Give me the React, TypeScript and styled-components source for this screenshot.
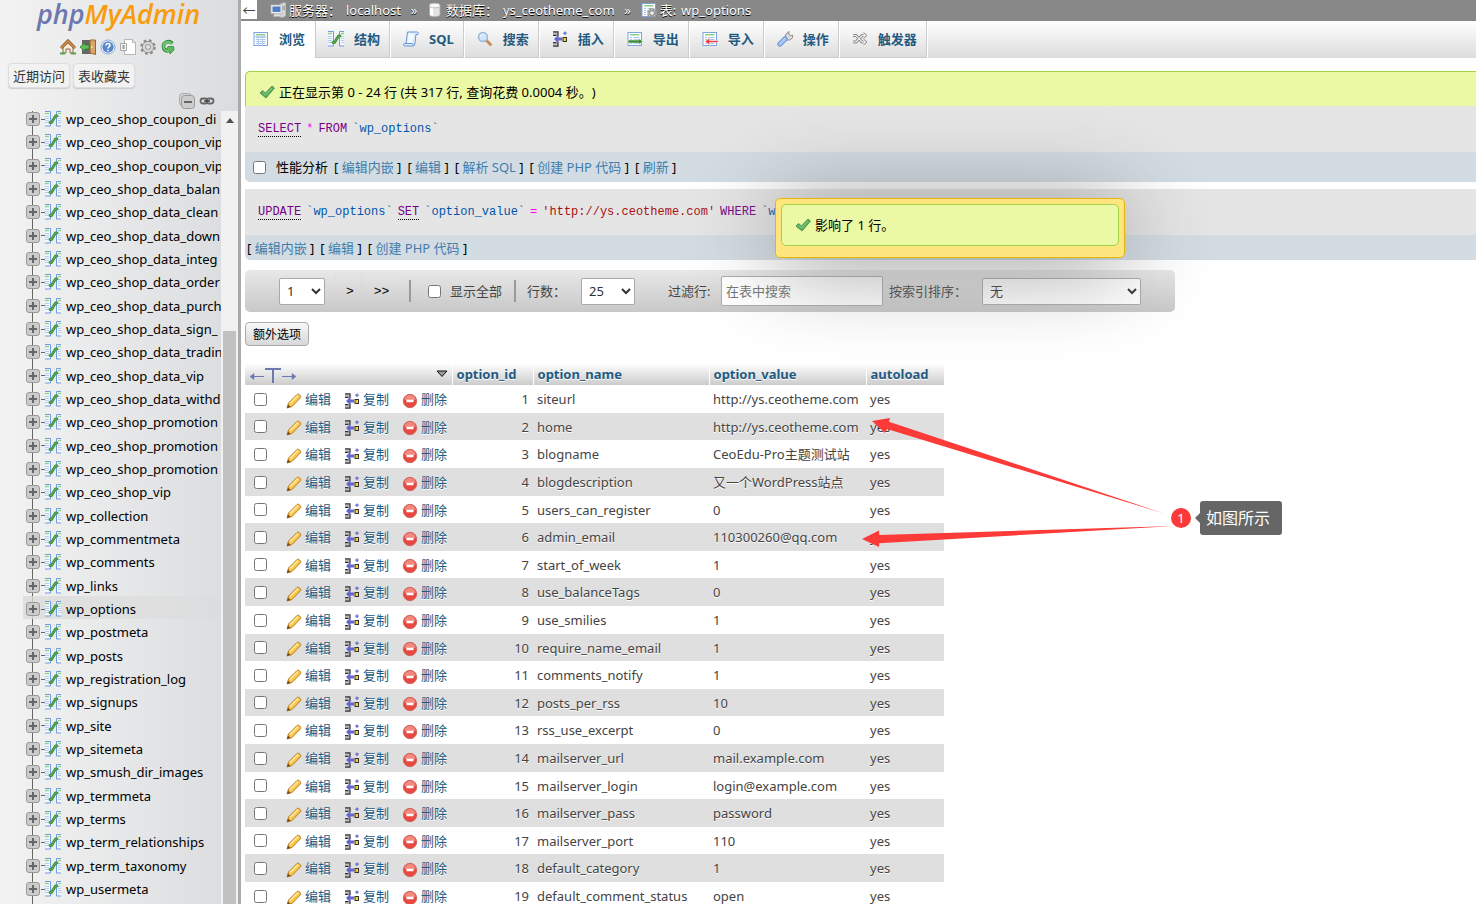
import React from "react";
import styled, { createGlobalStyle } from "styled-components";

const GlobalStyle = createGlobalStyle`
  * { box-sizing: border-box; }
  body {
    margin: 0;
    background: #fff;
    color: #444;
    font-family: "Noto Sans", "Noto Sans CJK SC", sans-serif;
    font-size: 13px;
    line-height: 18px;
    text-spacing-trim: space-all;
    overflow: hidden;
  }
  button, input, select { font-family: inherit; font-size: 13px; margin: 0; }
  a { text-decoration: none; }
`;

/* ---------- icons ---------- */

const Icon = styled.svg.attrs({ viewBox: "0 0 16 16", "aria-hidden": true })`
  width: 16px;
  height: 16px;
  flex: none;
  display: block;
`;

const Sheet = () => (
  <>
    <rect x="1" y="1.5" width="13.5" height="13" fill="#fdfeff" stroke="#7da4dc" />
    <rect x="3" y="3" width="9.500" height="1.500" fill="#8fce8a" />
    <path d="M3 6.500h2M6.500 6.500h6M3 8.500h2M6.500 8.500h6M3 10.500h2M6.500 10.500h6M3 12.500h2M6.500 12.500h6" stroke="#a9c4ec" />
  </>
);

const BrowseIcon = () => (
  <Icon>
    <Sheet />
    <path d="M2 5.500h11.500M5.500 5.500v9M9.500 5.500v9" stroke="#b9cff0" />
  </Icon>
);

const StructureIcon = () => (
  <Icon>
    <path d="M0 .5h5.500v14.500H0M16 .5h-4.500v14.500H16" fill="#f4f8ff" stroke="#6f9bdc" />
    <path d="M0 2.500h4M13 2.500h3" stroke="#8fce8a" strokeWidth="1.500" />
    <path d="M0 5.500h4M0 7.500h4M0 9.500h4M0 11.500h4M13 5.500h3M13 7.500h3M13 9.500h3M13 11.500h3" stroke="#b3cbee" />
    <path d="M5 11.500h1.500L10.500 5H12" fill="none" stroke="#3f8f3a" strokeWidth="2.800" strokeLinecap="round" strokeLinejoin="round" />
    <path d="M5 11.500h1.500L10.500 5H12" fill="none" stroke="#66b15c" strokeWidth="1" strokeLinecap="round" />
  </Icon>
);

const SqlIcon = () => (
  <Icon>
    <path d="M4.500 1h10c1 0 1.200 2.500.3 2.500H13L11.800 13c-.2 1.500-.8 2-2 2H1.500C.3 15 .3 12.500 1.500 12.500H3z" fill="#d9eafc" stroke="#6a94d4" />
    <path d="M5.500 2.500h5.500l-1.300 9.500H4.300z" fill="#f2f8ff" />
    <path d="M2 12.500h7.500c.8.300.5 2 .8 2.300" fill="none" stroke="#6a94d4" />
  </Icon>
);

const SearchIcon = () => (
  <Icon>
    <path d="M9.500 9.500l4 4" stroke="#c98d55" strokeWidth="3" strokeLinecap="round" />
    <circle cx="6" cy="6" r="4.500" fill="#cfe5fb" stroke="#9db5d8" strokeWidth="1.500" />
    <path d="M3.500 5.500c.5-1.500 1.500-2 3-2" stroke="#fff" fill="none" />
  </Icon>
);

const InsertIcon = () => (
  <Icon>
    <path d="M1 1h5v4.500H4.500V4H1zM1 15h5v-4.500H4.500V12H1z" fill="#bbb" />
    <path d="M1 .8h5V5M1 4.300h3.500M1 15.200h5V11M1 11.700h3.500" fill="none" stroke="#333" strokeWidth="1.200" />
    <path d="M2 8l4.500-4.500v3H10v3H6.500v3z" fill="#6666cc" />
    <rect x="11" y="6.500" width="3.500" height="4" fill="#fc3" stroke="#333" />
    <path d="M13 .5v3.500M11.200 2.200h3.600" stroke="#6666cc" strokeWidth="1.200" />
  </Icon>
);

const ExportIcon = () => (
  <Icon>
    <Sheet />
    <path d="M1 9h11V7.500l4 3-4 3V12H1z" fill="#3c8c3a" stroke="#fff" strokeWidth=".5" />
  </Icon>
);

const ImportIcon = () => (
  <Icon>
    <Sheet />
    <path d="M16 9.500H7.500V7L3 10.500 7.500 14v-2.500H16z" fill="#ee3b3b" stroke="#fff" strokeWidth=".5" />
  </Icon>
);

const WrenchIcon = () => (
  <Icon>
    <path d="M8 7.500l1-4.500 3-2.500v3.200l1.500 1L15.500 4l.2 2.800-3 2.200H10z" fill="#ddd" stroke="#8c8c8c" />
    <path d="M3 13l5-5" stroke="#5c83c9" strokeWidth="5" strokeLinecap="round" />
    <path d="M3 13l5-5" stroke="#a9c8f5" strokeWidth="3.200" strokeLinecap="round" />
  </Icon>
);

const ShuffleIcon = () => (
  <Icon>
    <path d="M1 4.500h3L10 11h3M1 11h3l6-6.500h3" fill="none" stroke="#888" strokeWidth="3" />
    <path d="M11.500 1.500l3.500 3-3.500 3M11.500 8l3.500 3-3.500 3" fill="#eee" stroke="#888" />
    <path d="M1 4.500h3L10 11h3M1 11h3l6-6.500h3" fill="none" stroke="#eee" strokeWidth="1.200" />
  </Icon>
);

const ServerIcon = () => (
  <Icon>
    <path d="M10 2l3-1.500h3V14l-3 1.500h-3z" fill="#d4d4d4" stroke="#999" strokeWidth=".7" />
    <path d="M11 5h4M11 7h4" stroke="#888" />
    <rect x="1" y="3" width="11" height="8.500" fill="#f2f2f2" stroke="#bbb" strokeWidth=".7" />
    <rect x="2.500" y="4.500" width="8" height="5.500" fill="#4d7fc4" />
    <path d="M3 14.500h8l-1.500-2.500h-5z" fill="#ddd" />
  </Icon>
);

const DatabaseIcon = () => (
  <Icon>
    <path d="M2.500 3.500v9c0 3 10.500 3 10.500 0v-9z" fill="#e2e2e2" stroke="#aaa" strokeWidth=".8" />
    <path d="M3 4h3v10.200L3 13z" fill="#fff" />
    <ellipse cx="7.700" cy="3.500" rx="5.200" ry="2.300" fill="#f8f8f8" stroke="#b5b5b5" strokeWidth=".8" />
  </Icon>
);

const TableGearIcon = () => (
  <Icon>
    <Sheet />
    <circle cx="11" cy="11" r="3.500" fill="none" stroke="#999" strokeWidth="3" strokeDasharray="2 .75" />
    <circle cx="11" cy="11" r="2.600" fill="#eee" stroke="#999" strokeWidth="1.500" />
  </Icon>
);

const TickIcon = () => (
  <Icon>
    <path d="M1 9l2.500-2.500L6.500 9 13 2l2.500 2L7 14z" fill="#5cae5e" stroke="#3e8a45" strokeWidth=".8" strokeLinejoin="round" />
    <path d="M3.500 8l3 3L13 4" fill="none" stroke="#8fcf8d" />
  </Icon>
);

const HomeIcon = () => (
  <Icon>
    <path d="M3 8v6h3v-4h4v4h3V8L8 3.500z" fill="#f5ead7" stroke="#8d6b42" />
    <path d="M1 9l7-7 7 7" fill="none" stroke="#7c4b20" strokeWidth="3" />
    <path d="M1 9l7-7 7 7" fill="none" stroke="#dc9a4d" strokeWidth="1.500" />
    <path d="M0 14.500h5M11 14.500h5" stroke="#56a34b" strokeWidth="2" />
  </Icon>
);

const ExitIcon = () => (
  <Icon>
    <rect x="2" y="1" width="9" height="14" fill="#666" />
    <path d="M10 1h5.500v14.500L10 14z" fill="#d9a76c" stroke="#9b6630" />
    <circle cx="11.800" cy="8" r=".8" fill="#fff" />
    <path d="M0 8l5-4.500V6h4v4H5v2.500z" fill="#63bb5a" stroke="#2f7c30" strokeWidth=".8" />
  </Icon>
);

const HelpIcon = () => (
  <Icon>
    <circle cx="8" cy="8" r="7" fill="#fff" stroke="#88a8d4" />
    <circle cx="8" cy="8" r="5.700" fill="#5587cb" />
    <path d="M6 6.500c0-2.600 4-2.600 4-.2C10 7.800 8 7.600 8 9.500M8 10.700v1.500" fill="none" stroke="#fff" strokeWidth="1.600" />
  </Icon>
);

const DocIcon = () => (
  <Icon>
    <path d="M4.500.5h8l3 3v12h-11z" fill="#fff" stroke="#b5b5b5" />
    <path d="M12.500.5v3h3" fill="#eee" stroke="#b5b5b5" />
    <path d="M.5 4.500h6v7h-6z" fill="#f3f3f3" stroke="#a8a8a8" />
    <path d="M3.500 6v4" stroke="#999" strokeWidth="2" />
  </Icon>
);

const GearIcon = () => (
  <Icon>
    <circle cx="8" cy="8" r="6.300" fill="none" stroke="#8b8b8b" strokeWidth="3" strokeDasharray="2.600 2.350" />
    <circle cx="8" cy="8" r="4" fill="none" stroke="#8b8b8b" strokeWidth="4" />
    <circle cx="8" cy="8" r="4" fill="none" stroke="#d5d5d5" strokeWidth="2.600" />
  </Icon>
);

const ReloadIcon = () => (
  <Icon>
    <path d="M12.500 4.500C8 .5 3 4 3.500 8c.3 2.500 2 4 5 4" fill="none" stroke="#2f8a3c" strokeWidth="3.600" />
    <path d="M8 7.500h5.500l.5 3.500-4 4-.8-3-2.700-1z" fill="#5dba5d" stroke="#2f8a3c" strokeWidth=".8" />
    <path d="M12.300 4.800C8 .8 3 4 3.500 8c.3 2.500 2 4 5 4" fill="none" stroke="#7acb78" strokeWidth="1.800" />
  </Icon>
);

const CollapseIcon = () => (
  <Icon>
    <rect x=".5" y=".5" width="12" height="12" rx="3" fill="#d4d4d4" stroke="#aaa" />
    <rect x="2.500" y="2.500" width="13" height="13" rx="3" fill="#ccc" stroke="#999" />
    <path d="M5 9h8" stroke="#666" strokeWidth="2" />
  </Icon>
);

const LinkIcon = () => (
  <Icon>
    <rect x="1.500" y="5.500" width="7" height="5" rx="2.500" fill="none" stroke="#666" strokeWidth="1.800" />
    <rect x="7.500" y="5.500" width="7" height="5" rx="2.500" fill="none" stroke="#666" strokeWidth="1.800" />
    <path d="M5 8h6" stroke="#444" strokeWidth="1.500" />
  </Icon>
);

const PlusIcon = () => (
  <Icon>
    <rect x="1.500" y="1.500" width="13" height="13" rx="2.500" fill="#ccc" stroke="#999" />
    <path d="M4 8h8M8 4v8" stroke="#666" strokeWidth="2" />
  </Icon>
);

const PencilIcon = () => (
  <Icon>
    <path d="M1 15l1.500-5L11 1.500c1.500-1.200 4.500 1.500 3.500 3.200L6 13.500z" fill="#f9c74a" stroke="#b87a1c" strokeLinejoin="round" />
    <path d="M4 10.500l8-8" stroke="#fde9a6" strokeWidth="1.600" />
    <path d="M1 15l1.200-3.500L4.500 14z" fill="#7a4b17" />
  </Icon>
);

const DeleteIcon = () => (
  <Icon>
    <circle cx="8" cy="8" r="6.700" fill="#e8483f" stroke="#cf6a62" />
    <path d="M2.500 7a5.500 5 0 0 1 11 0z" fill="#f28a80" />
    <rect x="4.500" y="6.700" width="7" height="2.600" rx=".5" fill="#fff" />
  </Icon>
);

/* ---------- sidebar ---------- */

const Page = styled.div`
  position: relative;
  display: flex;
  height: 100vh;
  overflow: hidden;
`;

const Sidebar = styled.aside`
  flex: none;
  width: 241px;
  display: flex;
  flex-direction: column;
  border-right: 3px solid #aaa;
  background: linear-gradient(to right, #f3f3f3, #dadcde);
  color: #000;
`;

const Logo = styled.a`
  height: 34px;
  padding-left: 37px;
  font-family: "Open Sans", sans-serif;
  font-size: 27px;
  font-style: italic;
  font-weight: 600;
  line-height: 28px;
  color: #f89c0e;
  white-space: nowrap;
  span { color: #6c78af; }
`;

const Shortcuts = styled.nav`
  display: flex;
  gap: 4px;
  padding: 5px 0 8px 60px;
  a { display: block; }
`;

const QuickButtons = styled.div`
  display: flex;
  gap: 3px;
  padding-left: 8px;
`;

const QuickButton = styled.button`
  height: 25px;
  padding: 0 4px;
  border: 1px solid #ddd;
  border-radius: 4px;
  background: #f2f2f2;
  box-shadow: 0 1px 1px #ccc;
  color: #333;
`;

const TreeTools = styled.div`
  display: flex;
  justify-content: flex-end;
  gap: 4px;
  height: 23px;
  padding: 5px 23px 0 0;
`;

const TreePane = styled.div`
  flex: 1;
  min-height: 0;
  display: flex;
`;

const TreeView = styled.div`
  flex: 1;
  min-width: 0;
  overflow: hidden;
  padding-left: 23px;
`;

const Tree = styled.ul`
  list-style: none;
  margin: -5px 0 0;
  padding: 0 0 8px;
  background: linear-gradient(#666, #666) 9px 0 / 1px 100% no-repeat;
`;

const TreeItem = styled.li<{ $active?: boolean }>`
  display: flex;
  align-items: center;
  height: 23px;
  padding: 3px 0 0 2px;
  white-space: nowrap;
  background: ${(p) => (p.$active ? "linear-gradient(to right, #dadadacc, #dadada66)" : "none")};
  &:nth-child(3n) { height: 24px; }
`;

const Branch = styled.span`
  flex: none;
  width: 4px;
  height: 1px;
  background: #666;
`;

const TreeLink = styled.a`
  margin-left: 5px;
  color: #000;
`;

const ScrollTrack = styled.div`
  width: 17px;
  display: flex;
  flex-direction: column;
  align-items: center;
  background: #f1f1f1;
`;

const ScrollUp = styled.span`
  margin: 7px 0 208px;
  border: 4px solid transparent;
  border-top: 0;
  border-bottom: 5px solid #505050;
`;

const ScrollThumb = styled.span`
  flex: 1;
  width: 13px;
  background: #c1c1c1;
`;

/* ---------- main column ---------- */

const Main = styled.main`
  flex: 1;
  min-width: 0;
  overflow: hidden;
`;

const Crumbs = styled.nav`
  display: flex;
  height: 21px;
  background: #888;
  color: #fff;
  text-shadow: 0 1px 0 #000;
  white-space: nowrap;
`;

const BackButton = styled.button`
  width: 16px;
  height: 19px;
  margin-right: 13px;
  padding: 0;
  border: 0;
  background: #fff;
  color: #444;
  line-height: 18px;
`;

const Crumb = styled.a`
  display: flex;
  align-items: center;
  gap: 3px;
  height: 20px;
  color: #fff;
  span { margin-left: 2px; }
`;

const Chevron = styled.span`
  width: 26px;
  line-height: 20px;
  text-align: center;
`;

const Tabs = styled.nav`
  display: flex;
  height: 37px;
  background: linear-gradient(#fff, #dcdcdc);
`;

const Tab = styled.a<{ $active?: boolean }>`
  display: flex;
  align-items: center;
  gap: 10px;
  padding: 0 10px 2px 12px;
  border-right: 1px solid ${(p) => (p.$active ? "#ccc" : "#fff")};
  box-shadow: ${(p) => (p.$active ? "none" : "inset -1px 0 0 #ccc, inset 0 -1px 0 #ccc")};
  background: ${(p) => (p.$active ? "#fff" : "none")};
  color: #235a81;
  font-weight: 700;
  white-space: nowrap;
`;

const Content = styled.div`
  padding: 13px 0 0 4px;
`;

const Success = styled.div`
  display: flex;
  align-items: center;
  gap: 4px;
  height: 35px;
  padding: 6px 0 0 13px;
  border: solid #a2d246;
  border-width: 1px 0 0 1px;
  border-top-left-radius: 5px;
  background: #ebf8a4;
  color: #000;
`;

const SqlText = styled.code`
  display: flex;
  gap: 5px;
  height: 46px;
  padding: 15px 0 0 13px;
  background: #e5e5e5;
  font-family: "Liberation Mono", monospace;
  font-size: 12px;
  line-height: 18px;
  white-space: nowrap;
`;

const tokenColors = { keyword: "#708", name: "#05a", string: "#a11", operator: "#f0f" };

const Token = styled.span<{ $kind: keyof typeof tokenColors; $doc?: boolean }>`
  height: 16px;
  line-height: 17px;
  color: ${(p) => tokenColors[p.$kind]};
  border-bottom: ${(p) => (p.$doc ? "1px dotted #000" : "0")};
`;

const SqlTools = styled.div<{ $tall?: boolean }>`
  display: flex;
  align-items: center;
  gap: 6px;
  height: ${(p) => (p.$tall ? 30 : 25)}px;
  margin-bottom: ${(p) => (p.$tall ? 7 : 10)}px;
  padding-left: ${(p) => (p.$tall ? 8 : 2)}px;
  border-bottom-left-radius: 5px;
  background: #d3dce3;
  color: #000;
  white-space: nowrap;
  a { color: #3f7dab; }
`;

const Check = styled.input.attrs({ type: "checkbox" })`
  width: 13px;
  height: 13px;
  flex: none;
`;

const ProfileLabel = styled.label`
  display: flex;
  align-items: center;
  gap: 10px;
`;

const Pager = styled.div`
  display: flex;
  align-items: center;
  width: fit-content;
  height: 42px;
  padding: 0 34px;
  border-radius: 5px;
  background: linear-gradient(#e8e8e8, #c8c8c8);
  white-space: nowrap;
`;

const Select = styled.select<{ $width: number }>`
  width: ${(p) => p.$width}px;
  height: 27px;
  padding: 0 3px;
  border: 1px solid #aaa;
  border-radius: 2px;
  background: #fff;
  color: #333;
`;

const PageButtons = styled.div`
  display: flex;
  margin: 0 11px 0 10px;
`;

const PageButton = styled.button<{ $width: number }>`
  width: ${(p) => p.$width}px;
  height: 36px;
  padding: 0 0 0 3px;
  border: 1px solid #d2d2d233;
  background: none;
  color: #000;
  font-family: "Liberation Mono", monospace;
`;

const Divider = styled.span`
  width: 2px;
  height: 22px;
  background: #999;
`;

const ShowAll = styled.label`
  display: flex;
  align-items: center;
  gap: 9px;
  margin: 0 12px 0 17px;
`;

const Field = styled.label<{ $start: number; $label: number }>`
  display: flex;
  align-items: center;
  margin-left: ${(p) => p.$start}px;
  > span { width: ${(p) => p.$label}px; }
`;

const FilterInput = styled.input`
  width: 162px;
  height: 30px;
  padding: 0 4px;
  border: 1px solid #aaa;
  border-radius: 2px;
  background: #fff;
  &::placeholder { color: #757575; }
`;

const OptionsButton = styled.button`
  display: block;
  height: 24px;
  margin: 10px 0 17px;
  padding: 0 7px;
  border: 1px solid #aaa;
  border-radius: 4px;
  background: linear-gradient(#f8f8f8, #d8d8d8);
  color: #000;
  font-size: 12px;
`;

const DataTable = styled.table`
  width: 699px;
  table-layout: fixed;
  border-collapse: collapse;
  text-shadow: 0 1px 0 #fff;
`;

const Head = styled.th<{ $width: number }>`
  width: ${(p) => p.$width}px;
  height: 22px;
  padding: 0 4px;
  border-right: 1px solid #fff;
  background: linear-gradient(#fff, #ccc);
  color: #235a81;
  font-weight: 700;
  text-align: left;
`;

const HeadTools = styled.span`
  display: flex;
  align-items: center;
  justify-content: space-between;
  svg { display: block; }
`;

const Row = styled.tr`
  height: 28px;
  &:nth-child(5n + 2), &:nth-child(5n) { height: 27px; }
  &:nth-child(even) { background: #dfdfdf; }
`;

const Cell = styled.td<{ $right?: boolean }>`
  padding: 0 4px;
  text-align: ${(p) => (p.$right ? "right" : "left")};
  white-space: nowrap;
`;

const Actions = styled.div`
  display: flex;
  align-items: center;
  gap: 13px;
  padding-left: 5px;
`;

const Action = styled.a`
  display: flex;
  align-items: center;
  gap: 3px;
  color: #235a81;
  svg { margin-top: 3px; }
  &:first-of-type { margin-left: 6px; }
`;

/* ---------- floating layers ---------- */

const Notice = styled.div`
  position: absolute;
  top: 198px;
  left: 775px;
  width: 350px;
  height: 60px;
  padding: 5px;
  border: 1px solid #e2b709;
  border-radius: 5px;
  background: #ffe57e;
  box-shadow: 0 5px 90px #888;
`;

const NoticeText = styled.div`
  display: flex;
  align-items: center;
  gap: 4px;
  height: 42px;
  padding-left: 13px;
  border: 1px solid #a2d246;
  border-radius: 5px;
  background: #ebf8a4;
  color: #000;
`;

const Arrows = styled.svg`
  position: absolute;
  top: 410px;
  left: 860px;
  width: 320px;
  height: 140px;
`;

const Marker = styled.div`
  position: absolute;
  top: 501px;
  left: 1171px;
  display: flex;
  align-items: center;
`;

const MarkerNumber = styled.span`
  width: 20px;
  height: 20px;
  border-radius: 50%;
  background: #fc3a38;
  color: #fff;
  line-height: 20px;
  text-align: center;
`;

const MarkerTip = styled.span`
  border: 5px solid transparent;
  border-left: 0;
  border-right-color: #666;
  margin-left: 4px;
`;

const MarkerText = styled.span`
  height: 34px;
  padding: 0 12px 0 6px;
  border-radius: 3px;
  background: #666;
  color: #fff;
  font-size: 16px;
  line-height: 34px;
`;

/* ---------- data ---------- */

const tables = [
  "wp_ceo_shop_coupon_di", "wp_ceo_shop_coupon_vip", "wp_ceo_shop_coupon_vip",
  "wp_ceo_shop_data_balan", "wp_ceo_shop_data_clean", "wp_ceo_shop_data_down",
  "wp_ceo_shop_data_integ", "wp_ceo_shop_data_order", "wp_ceo_shop_data_purch",
  "wp_ceo_shop_data_sign_", "wp_ceo_shop_data_tradin", "wp_ceo_shop_data_vip",
  "wp_ceo_shop_data_withd", "wp_ceo_shop_promotion", "wp_ceo_shop_promotion",
  "wp_ceo_shop_promotion", "wp_ceo_shop_vip", "wp_collection", "wp_commentmeta",
  "wp_comments", "wp_links", "wp_options", "wp_postmeta", "wp_posts", "wp_registration_log",
  "wp_signups", "wp_site", "wp_sitemeta", "wp_smush_dir_images", "wp_termmeta", "wp_terms",
  "wp_term_relationships", "wp_term_taxonomy", "wp_usermeta",
];

const tabs: [string, React.FC][] = [
  ["浏览", BrowseIcon], ["结构", StructureIcon], ["SQL", SqlIcon], ["搜索", SearchIcon],
  ["插入", InsertIcon], ["导出", ExportIcon], ["导入", ImportIcon], ["操作", WrenchIcon],
  ["触发器", ShuffleIcon],
];

const rows: [string, string][] = [
  ["siteurl", "http://ys.ceotheme.com"], ["home", "http://ys.ceotheme.com"],
  ["blogname", "CeoEdu-Pro主题测试站"], ["blogdescription", "又一个WordPress站点"],
  ["users_can_register", "0"], ["admin_email", "110300260@qq.com"], ["start_of_week", "1"],
  ["use_balanceTags", "0"], ["use_smilies", "1"], ["require_name_email", "1"],
  ["comments_notify", "1"], ["posts_per_rss", "10"], ["rss_use_excerpt", "0"],
  ["mailserver_url", "mail.example.com"], ["mailserver_login", "login@example.com"],
  ["mailserver_pass", "password"], ["mailserver_port", "110"], ["default_category", "1"],
  ["default_comment_status", "open"],
];

const shortcuts: [string, React.FC][] = [
  ["主页", HomeIcon], ["退出", ExitIcon], ["帮助", HelpIcon], ["文档", DocIcon],
  ["设置", GearIcon], ["刷新", ReloadIcon],
];

const Bracketed = ({ items }: { items: string[] }) => (
  <>
    {items.map((t) => (
      <span key={t}>[ <a href="#">{t}</a> ]</span>
    ))}
  </>
);

export default function App() {
  return (
    <Page>
      <GlobalStyle />
      <Sidebar>
        <Logo href="#"><span>php</span>MyAdmin</Logo>
        <Shortcuts>
          {shortcuts.map(([name, Glyph]) => (
            <a key={name} href="#" aria-label={name}><Glyph /></a>
          ))}
        </Shortcuts>
        <QuickButtons>
          <QuickButton>近期访问</QuickButton>
          <QuickButton>表收藏夹</QuickButton>
        </QuickButtons>
        <TreeTools><CollapseIcon /><LinkIcon /></TreeTools>
        <TreePane>
          <TreeView>
            <Tree>
              {tables.map((name, i) => (
                <TreeItem key={i} $active={name === "wp_options"}>
                  <PlusIcon />
                  <Branch />
                  <StructureIcon />
                  <TreeLink href="#">{name}</TreeLink>
                </TreeItem>
              ))}
            </Tree>
          </TreeView>
          <ScrollTrack><ScrollUp /><ScrollThumb /></ScrollTrack>
        </TreePane>
      </Sidebar>

      <Main>
        <Crumbs>
          <BackButton>←</BackButton>
          <Crumb href="#"><ServerIcon />服务器：<span>localhost</span></Crumb>
          <Chevron>»</Chevron>
          <Crumb href="#"><DatabaseIcon />数据库：<span>ys_ceotheme_com</span></Crumb>
          <Chevron>»</Chevron>
          <Crumb href="#"><TableGearIcon />表:<span>wp_options</span></Crumb>
        </Crumbs>
        <Tabs>
          {tabs.map(([name, Glyph], i) => (
            <Tab key={name} href="#" $active={i === 0}><Glyph />{name}</Tab>
          ))}
        </Tabs>
        <Content>
          <Success><TickIcon />正在显示第 0 - 24 行 (共 317 行, 查询花费 0.0004 秒。)</Success>
          <SqlText>
            <Token $kind="keyword" $doc>SELECT</Token>
            <Token $kind="operator">*</Token>
            <Token $kind="keyword">FROM</Token>
            <Token $kind="name">`wp_options`</Token>
          </SqlText>
          <SqlTools $tall>
            <ProfileLabel><Check />性能分析</ProfileLabel>
            <Bracketed items={["编辑内嵌", "编辑", "解析 SQL", "创建 PHP 代码", "刷新"]} />
          </SqlTools>
          <SqlText>
            <Token $kind="keyword" $doc>UPDATE</Token>
            <Token $kind="name">`wp_options`</Token>
            <Token $kind="keyword" $doc>SET</Token>
            <Token $kind="name">`option_value`</Token>
            <Token $kind="operator">=</Token>
            <Token $kind="string">'http://ys.ceotheme.com'</Token>
            <Token $kind="keyword">WHERE</Token>
            <Token $kind="name">`wp_options`</Token>
          </SqlText>
          <SqlTools>
            <Bracketed items={["编辑内嵌", "编辑", "创建 PHP 代码"]} />
          </SqlTools>

          <Pager>
            <Select $width={46} aria-label="页码"><option>1</option></Select>
            <PageButtons>
              <PageButton $width={27}>&gt;</PageButton>
              <PageButton $width={36}>&gt;&gt;</PageButton>
            </PageButtons>
            <Divider />
            <ShowAll><Check />显示全部</ShowAll>
            <Divider />
            <Field $start={11} $label={54}>
              <span>行数：</span>
              <Select $width={54}><option>25</option></Select>
            </Field>
            <Field $start={33} $label={53}>
              <span>过滤行:</span>
              <FilterInput placeholder="在表中搜索" />
            </Field>
            <Field $start={6} $label={93}>
              <span>按索引排序：</span>
              <Select $width={159}><option>无</option></Select>
            </Field>
          </Pager>

          <OptionsButton>额外选项</OptionsButton>

          <DataTable>
            <thead>
              <tr>
                <Head $width={207}>
                  <HeadTools>
                    <svg width="48" height="18" viewBox="0 0 48 18" fill="none" stroke="#6c78af">
                      <path d="M16 4h16M24 4v14" strokeWidth="2" />
                      <path d="M2 11.500h13M33 11.500h13" />
                      <path d="M5 8.500l-4 3 4 3zM43 8.500l4 3-4 3z" fill="#6c78af" strokeWidth=".5" />
                    </svg>
                    <svg width="12" height="8" viewBox="0 0 12 8">
                      <path d="M1 1h10L6 6.500z" fill="#999" stroke="#111" />
                    </svg>
                  </HeadTools>
                </Head>
                <Head $width={81}>option_id</Head>
                <Head $width={176}>option_name</Head>
                <Head $width={157}>option_value</Head>
                <Head $width={78}>autoload</Head>
              </tr>
            </thead>
            <tbody>
              {rows.map(([name, value], i) => (
                <Row key={name}>
                  <Cell>
                    <Actions>
                      <Check aria-label={name} />
                      <Action href="#"><PencilIcon />编辑</Action>
                      <Action href="#"><InsertIcon />复制</Action>
                      <Action href="#"><DeleteIcon />删除</Action>
                    </Actions>
                  </Cell>
                  <Cell $right>{i + 1}</Cell>
                  <Cell>{name}</Cell>
                  <Cell>{value}</Cell>
                  <Cell>yes</Cell>
                </Row>
              ))}
            </tbody>
          </DataTable>
        </Content>
      </Main>

      <Notice>
        <NoticeText><TickIcon />影响了 1 行。</NoticeText>
      </Notice>
      <Arrows viewBox="860 410 320 140" fill="#fc3a38" aria-hidden="true">
        <path d="M872 421l18-3-1 3.700L1164 513.500 887 429l-2 4z" />
        <path d="M862 539l17-8.500.3 4.500L1174 526 879.300 543.300l-.3 3.700z" />
      </Arrows>
      <Marker>
        <MarkerNumber>1</MarkerNumber>
        <MarkerTip />
        <MarkerText>如图所示</MarkerText>
      </Marker>
    </Page>
  );
}
